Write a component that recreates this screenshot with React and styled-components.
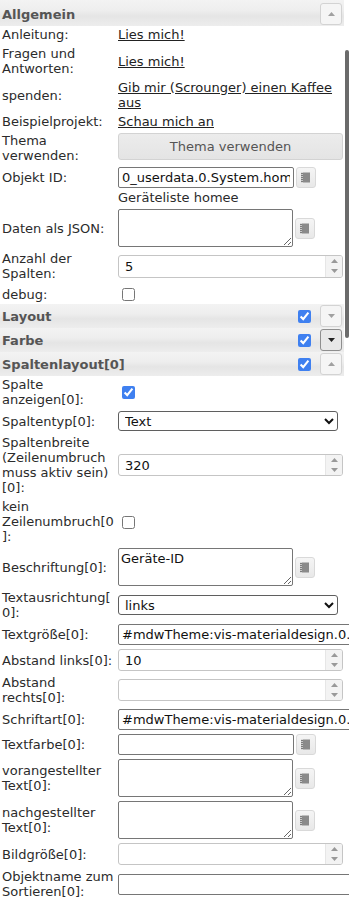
import React from "react";
import styled, { createGlobalStyle } from "styled-components";

const GlobalStyle = createGlobalStyle`
  html, body { margin: 0; padding: 0; background: #fff; overflow: hidden; }
  body {
    font-family: "DejaVu Sans", Verdana, sans-serif;
    font-size: 13px;
    line-height: 15px;
    color: #2b2b2b;
  }
  * { box-sizing: border-box; }
`;

const Page = styled.div`
  position: relative;
  width: 349px;
  height: 901px;
  overflow: hidden;
`;

const Panel = styled.div`
  width: 344px;
`;

/* section header (jquery-ui like bar) */
const Header = styled.div`
  display: flex;
  align-items: center;
  height: ${(p) => (p.$first ? 26 : 24)}px;
  padding: ${(p) => (p.$first ? "2px 2px 0 2px" : "0 2px")};
  background: linear-gradient(to bottom, #f3f3f3 0%, #eeeeee 40%, #e5e5e5 62%, #ededed 100%);
  font-weight: bold;
  color: #555;
`;

const HeadTitle = styled.span`
  flex: 1;
`;

const HeadCheck = styled.input`
  width: 13px;
  height: 13px;
  margin: 0 9px 0 0;
  accent-color: #3f80f0;
`;

const Toggle = styled.span`
  display: flex;
  align-items: center;
  justify-content: center;
  width: 22px;
  height: 22px;
  border: 1px solid ${(p) => (p.$active ? "#8e8e8e" : "#d3d3d3")};
  border-radius: 3px;
  background: ${(p) => (p.$active ? "#e8e8e8" : "#f5f5f5")};
`;

const Body = styled.div`
  display: flex;
  flex-direction: column;
  gap: 2px;
`;

const Row = styled.div`
  display: grid;
  grid-template-columns: 114px 225px;
  column-gap: 2px;
  align-items: center;
  padding: 1px 0 1px 2px;
  margin-top: ${(p) => (p.$tight ? "-2px" : "0")};
`;

const Label = styled.div`
  overflow-wrap: anywhere;
`;

const Value = styled.div`
  display: flex;
  align-items: center;
  align-self: ${(p) => (p.$top ? "start" : "center")};
  gap: ${(p) => (p.$gap ? 2 : 0)}px;
  min-width: 0;
`;

const Link = styled.a`
  color: #222;
  text-decoration: underline;
  cursor: pointer;
`;

const Note = styled.span`
  color: #2b2b2b;
`;

const ThemeButton = styled.button`
  width: 225px;
  height: 27px;
  border: 1px solid #d3d3d3;
  border-radius: 3px;
  background: linear-gradient(to bottom, #ececec, #e4e4e4);
  color: #555;
  font: 13px "DejaVu Sans", Verdana, sans-serif;
  padding: 0;
`;

const TextInput = styled.input`
  width: ${(p) => (p.$wide ? 240 : 176)}px;
  flex: none;
  height: 21px;
  border: 1px solid #767676;
  border-radius: 2px;
  padding: 1px 3px;
  font: 13px "DejaVu Sans", Verdana, sans-serif;
  color: #111;
  background: #fff;
  outline: none;
`;

const TextArea = styled.textarea`
  display: block;
  width: 175px;
  height: 38px;
  border: 1px solid #767676;
  border-radius: 2px;
  padding: 2px;
  font: 13px/15px "DejaVu Sans", Verdana, sans-serif;
  color: #111;
  background: #fff;
  outline: none;
`;

const IdButton = styled.span`
  display: flex;
  align-items: center;
  justify-content: center;
  flex: none;
  width: 20px;
  height: 21px;
  border: 1px solid #d9d9d9;
  border-radius: 3px;
  background: linear-gradient(to bottom, #f5f5f5, #e8e8e8);
`;

const Select = styled.select`
  width: 220px;
  height: 20px;
  font: 13px "DejaVu Sans", Verdana, sans-serif;
  color: #111;
  border: 1px solid #5f5f5f;
  border-radius: 3px;
  background: #fff;
  padding: 0 0 0 2px;
`;

const SpinBox = styled.div`
  display: flex;
  width: 225px;
  height: ${(p) => (p.$tall ? 23 : 22)}px;
  border: 1px solid #c5c5c5;
  border-radius: 3px;
  overflow: hidden;
  background: #fff;
`;

const SpinInput = styled.input`
  flex: 1;
  min-width: 0;
  border: 0;
  outline: none;
  padding: 0 0 0 6px;
  font: 13px "DejaVu Sans", Verdana, sans-serif;
  color: #111;
  background: transparent;
`;

const SpinButtons = styled.div`
  display: flex;
  flex-direction: column;
  width: 17px;
  background: #f3f3f3;
  border-left: 1px solid #e6e6e6;
`;

const SpinHalf = styled.span`
  flex: 1;
  display: flex;
  align-items: center;
  justify-content: center;
`;

const Check = styled.input`
  width: 13px;
  height: 13px;
  margin: 3px 3px 2px 4px;
  accent-color: #3f80f0;
`;

const ScrollThumb = styled.div`
  position: absolute;
  left: 345px;
  top: 50px;
  width: 4px;
  height: 288px;
  background: #6b6b6b;
  border-radius: 2px;
`;

const Arrow = ({ up, color = "#9a9a9a", w = 7, h = 4 }) => (
  <svg width={w} height={h} viewBox="0 0 7 4">
    <polygon points={up ? "0,4 3.5,0 7,4" : "0,0 7,0 3.5,4"} fill={color} />
  </svg>
);

const IdIcon = () => (
  <svg width="10" height="11" viewBox="0 0 10 11">
    <rect x="2" y="0.5" width="7" height="10" fill="#8a8a8a" />
    <rect x="0" y="0.5" width="2" height="10" fill="#c8c8c8" />
    {[1, 3, 5, 7, 9].map((y) => (
      <rect key={y} x="0" y={y} width="2" height="1" fill="#7c7c7c" />
    ))}
  </svg>
);

function SectionHeader({ title, first, checked, open, active }) {
  return (
    <Header $first={first}>
      <HeadTitle>{title}</HeadTitle>
      {checked && <HeadCheck type="checkbox" defaultChecked />}
      <Toggle $active={active}>
        <Arrow up={open} color={active ? "#222" : "#a0a0a0"} />
      </Toggle>
    </Header>
  );
}

function Field({ label, children, gap, tight, top }) {
  return (
    <Row $tight={tight}>
      <Label>{label}</Label>
      <Value $gap={gap} $top={top}>
        {children}
      </Value>
    </Row>
  );
}

function Spinner({ value = "", tall }) {
  return (
    <SpinBox $tall={tall}>
      <SpinInput type="text" defaultValue={value} />
      <SpinButtons>
        <SpinHalf>
          <Arrow up color="#999" />
        </SpinHalf>
        <SpinHalf>
          <Arrow color="#999" />
        </SpinHalf>
      </SpinButtons>
    </SpinBox>
  );
}

function IdInput({ value = "" }) {
  return (
    <>
      <TextInput type="text" defaultValue={value} />
      <IdButton>
        <IdIcon />
      </IdButton>
    </>
  );
}

function IdArea({ value = "" }) {
  return (
    <>
      <TextArea defaultValue={value} />
      <IdButton>
        <IdIcon />
      </IdButton>
    </>
  );
}

export default function App() {
  return (
    <Page>
      <GlobalStyle />
      <Panel>
        <SectionHeader title="Allgemein" first open />
        <Body>
          <Field label="Anleitung:">
            <Link>Lies mich!</Link>
          </Field>
          <Field label="Fragen und Antworten:">
            <Link>Lies mich!</Link>
          </Field>
          <Field label="spenden:">
            <Link>Gib mir (Scrounger) einen Kaffee aus</Link>
          </Field>
          <Field label="Beispielprojekt:">
            <Link>Schau mich an</Link>
          </Field>
          <Field label="Thema verwenden:" top>
            <ThemeButton>Thema verwenden</ThemeButton>
          </Field>
          <Field label="Objekt ID:" gap>
            <IdInput value="0_userdata.0.System.homee.Geräteliste" />
          </Field>
          <Field label="" tight>
            <Note>Geräteliste homee</Note>
          </Field>
          <Field label="Daten als JSON:" gap>
            <IdArea />
          </Field>
          <Field label="Anzahl der Spalten:">
            <Spinner value="5" tall />
          </Field>
          <Field label="debug:">
            <Check type="checkbox" />
          </Field>
        </Body>

        <SectionHeader title="Layout" checked />
        <SectionHeader title="Farbe" checked active />
        <SectionHeader title="Spaltenlayout[0]" checked open />
        <Body>
          <Field label="Spalte anzeigen[0]:">
            <Check type="checkbox" defaultChecked />
          </Field>
          <Field label="Spaltentyp[0]:">
            <Select defaultValue="Text">
              <option>Text</option>
              <option>HTML</option>
              <option>Bild</option>
            </Select>
          </Field>
          <Field label="Spaltenbreite (Zeilenumbruch muss aktiv sein) [0]:">
            <Spinner value="320" />
          </Field>
          <Field label="kein Zeilenumbruch[0]:">
            <Check type="checkbox" />
          </Field>
          <Field label="Beschriftung[0]:" gap>
            <IdArea value="Geräte-ID" />
          </Field>
          <Field label="Textausrichtung[0]:">
            <Select defaultValue="links">
              <option>links</option>
              <option>zentriert</option>
              <option>rechts</option>
            </Select>
          </Field>
          <Field label="Textgröße[0]:">
            <TextInput $wide type="text" defaultValue="#mdwTheme:vis-materialdesign.0.fonts.table.size" />
          </Field>
          <Field label="Abstand links[0]:">
            <Spinner value="10" />
          </Field>
          <Field label="Abstand rechts[0]:">
            <Spinner />
          </Field>
          <Field label="Schriftart[0]:">
            <TextInput $wide type="text" defaultValue="#mdwTheme:vis-materialdesign.0.fonts.table.family" />
          </Field>
          <Field label="Textfarbe[0]:" gap>
            <IdInput />
          </Field>
          <Field label="vorangestellter Text[0]:" gap>
            <IdArea />
          </Field>
          <Field label="nachgestellter Text[0]:" gap>
            <IdArea />
          </Field>
          <Field label="Bildgröße[0]:">
            <Spinner />
          </Field>
          <Field label="Objektname zum Sortieren[0]:">
            <TextInput $wide type="text" />
          </Field>
        </Body>
      </Panel>
      <ScrollThumb />
    </Page>
  );
}
